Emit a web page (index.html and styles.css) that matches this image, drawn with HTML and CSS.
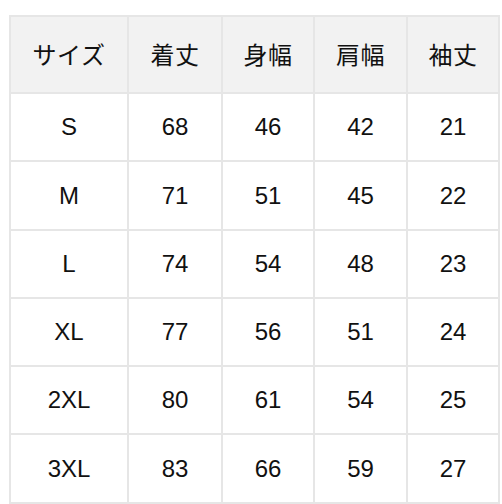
FILE: index.html
```html
<!DOCTYPE html>
<html lang="ja">
<head>
<meta charset="utf-8">
<link rel="stylesheet" href="styles.css">
</head>
<body>
<div class="size-table" role="table">
  <div class="cell head">サイズ</div><div class="cell head">着丈</div><div class="cell head">身幅</div><div class="cell head">肩幅</div><div class="cell head">袖丈</div>
  <div class="cell">S</div><div class="cell">68</div><div class="cell">46</div><div class="cell">42</div><div class="cell">21</div>
  <div class="cell">M</div><div class="cell">71</div><div class="cell">51</div><div class="cell">45</div><div class="cell">22</div>
  <div class="cell">L</div><div class="cell">74</div><div class="cell">54</div><div class="cell">48</div><div class="cell">23</div>
  <div class="cell">XL</div><div class="cell">77</div><div class="cell">56</div><div class="cell">51</div><div class="cell">24</div>
  <div class="cell">2XL</div><div class="cell">80</div><div class="cell">61</div><div class="cell">54</div><div class="cell">25</div>
  <div class="cell">3XL</div><div class="cell">83</div><div class="cell">66</div><div class="cell">59</div><div class="cell">27</div>
</div>
</body>
</html>
```
FILE: styles.css
```css
html, body {
  margin: 0;
  padding: 0;
  background: #fff;
}
body {
  padding: 15px 0 0 9px;
  font-family: "Liberation Sans", "Noto Sans CJK JP", sans-serif;
  color: #111;
}
.size-table {
  display: grid;
  grid-template-columns: 118px 94px 92px 93px 92px;
  grid-template-rows: 77px 68px 69px 68px 68px 68px 69px;
  width: max-content;
  border-top: 2px solid #e6e6e6;
  border-left: 2px solid #e6e6e6;
}
.cell {
  box-sizing: border-box;
  border-right: 2px solid #e6e6e6;
  border-bottom: 2px solid #e6e6e6;
  display: flex;
  align-items: center;
  justify-content: center;
  font-size: 24px;
}
.head {
  background: #f2f2f2;
  font-family: "Noto Sans CJK JP", sans-serif;
  font-size: 24px;
  letter-spacing: 0.5px;
  padding-bottom: 3px;
}
```
